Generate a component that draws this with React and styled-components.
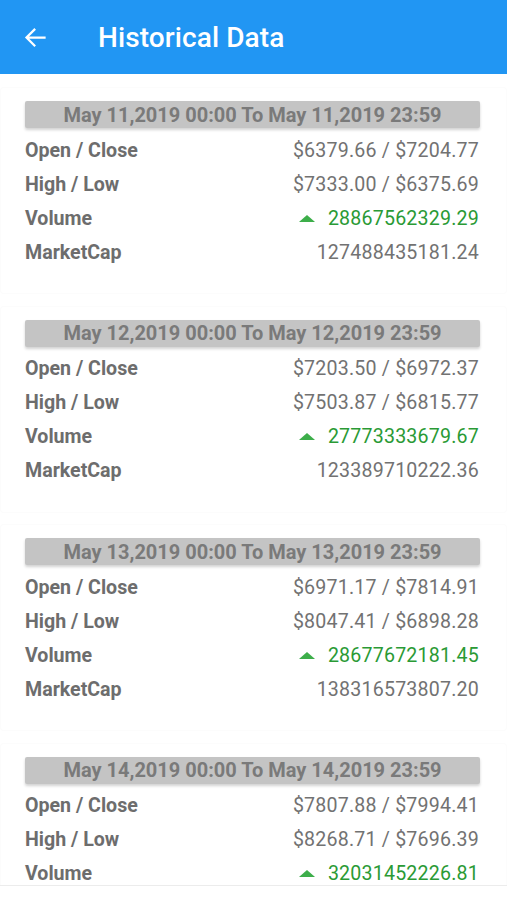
import React from 'react';
import styled, { createGlobalStyle } from 'styled-components';

const GlobalStyle = createGlobalStyle`
  html, body {
    margin: 0;
    padding: 0;
    background: #ffffff;
    font-family: Roboto, "Noto Sans", "Liberation Sans", sans-serif;
  }
`;

const Screen = styled.div`
  width: 507px;
  height: 900px;
  display: flex;
  flex-direction: column;
  background: #ffffff;
  overflow: hidden;
`;

const AppBar = styled.header`
  height: 74px;
  flex: none;
  display: flex;
  align-items: center;
  background: #2196f3;
  color: #ffffff;
  padding-left: 21px;
  box-sizing: border-box;
`;

const BackButton = styled.button`
  width: 28px;
  height: 28px;
  padding: 0;
  border: 0;
  background: none;
  color: inherit;
  display: flex;
  align-items: center;
  justify-content: center;
`;

const Title = styled.h1`
  margin: 0 0 0 49px;
  font-size: 28px;
  font-weight: 500;
  letter-spacing: 0.1px;
`;

const List = styled.main`
  height: 812px;
  flex: none;
  overflow: hidden;
  padding-top: 14px;
  box-sizing: border-box;
  border-bottom: 1px solid #ececec;
`;

const Card = styled.section`
  margin: 0 1px 13.5px;
  padding: 13px 27px 24px 24px;
  background: #ffffff;
  border-radius: 2px;
  box-shadow: 0 0 2px rgba(0, 0, 0, 0.06);
`;

const DateBar = styled.div`
  height: 27px;
  margin-right: -1px;
  display: flex;
  align-items: center;
  justify-content: center;
  background: #c4c4c4;
  border-radius: 2px;
  box-shadow: 0 2px 3px rgba(0, 0, 0, 0.18);
  color: #7a7a7a;
  font-size: 20px;
  font-weight: 700;
  margin-bottom: 5px;
`;

const Row = styled.div`
  height: 34px;
  display: flex;
  align-items: center;
  justify-content: space-between;
  font-size: 19.6px;
`;

const Label = styled.span`
  color: #6d6d6d;
  font-weight: 700;
`;

const Value = styled.span`
  display: flex;
  align-items: center;
  color: ${(p) => (p.up ? '#2a9a35' : '#727272')};
  letter-spacing: 0.2px;
`;

const UpArrow = styled.span`
  width: 0;
  height: 0;
  margin-right: 13px;
  border-left: 8px solid transparent;
  border-right: 8px solid transparent;
  border-bottom: 7px solid #3dae4a;
`;

// the last card is cut by the list edge: only its first three rows are visible
const data = [
  { day: 11, open: '$6379.66', close: '$7204.77', high: '$7333.00', low: '$6375.69', volume: '28867562329.29', cap: '127488435181.24' },
  { day: 12, open: '$7203.50', close: '$6972.37', high: '$7503.87', low: '$6815.77', volume: '27773333679.67', cap: '123389710222.36' },
  { day: 13, open: '$6971.17', close: '$7814.91', high: '$8047.41', low: '$6898.28', volume: '28677672181.45', cap: '138316573807.20' },
  { day: 14, open: '$7807.88', close: '$7994.41', high: '$8268.71', low: '$7696.39', volume: '32031452226.81', cap: null },
];

const HistoryCard = ({ item }) => (
  <Card>
    <DateBar>
      May {item.day},2019 00:00 To May {item.day},2019 23:59
    </DateBar>
    <Row>
      <Label>Open / Close</Label>
      <Value>
        {item.open} / {item.close}
      </Value>
    </Row>
    <Row>
      <Label>High / Low</Label>
      <Value>
        {item.high} / {item.low}
      </Value>
    </Row>
    <Row>
      <Label>Volume</Label>
      <Value up>
        <UpArrow />
        {item.volume}
      </Value>
    </Row>
    {item.cap && (
      <Row>
        <Label>MarketCap</Label>
        <Value>{item.cap}</Value>
      </Row>
    )}
  </Card>
);

const App = () => (
  <Screen>
    <GlobalStyle />
    <AppBar>
      <BackButton aria-label="Back">
        <svg width="27" height="27" viewBox="0 0 24 24" fill="none">
          <path d="M20 12H4.5M11 5l-7 7 7 7" stroke="#fff" strokeWidth="2" strokeLinecap="square" />
        </svg>
      </BackButton>
      <Title>Historical Data</Title>
    </AppBar>
    <List>
      {data.map((item) => (
        <HistoryCard key={item.day} item={item} />
      ))}
    </List>
  </Screen>
);

export default App;
